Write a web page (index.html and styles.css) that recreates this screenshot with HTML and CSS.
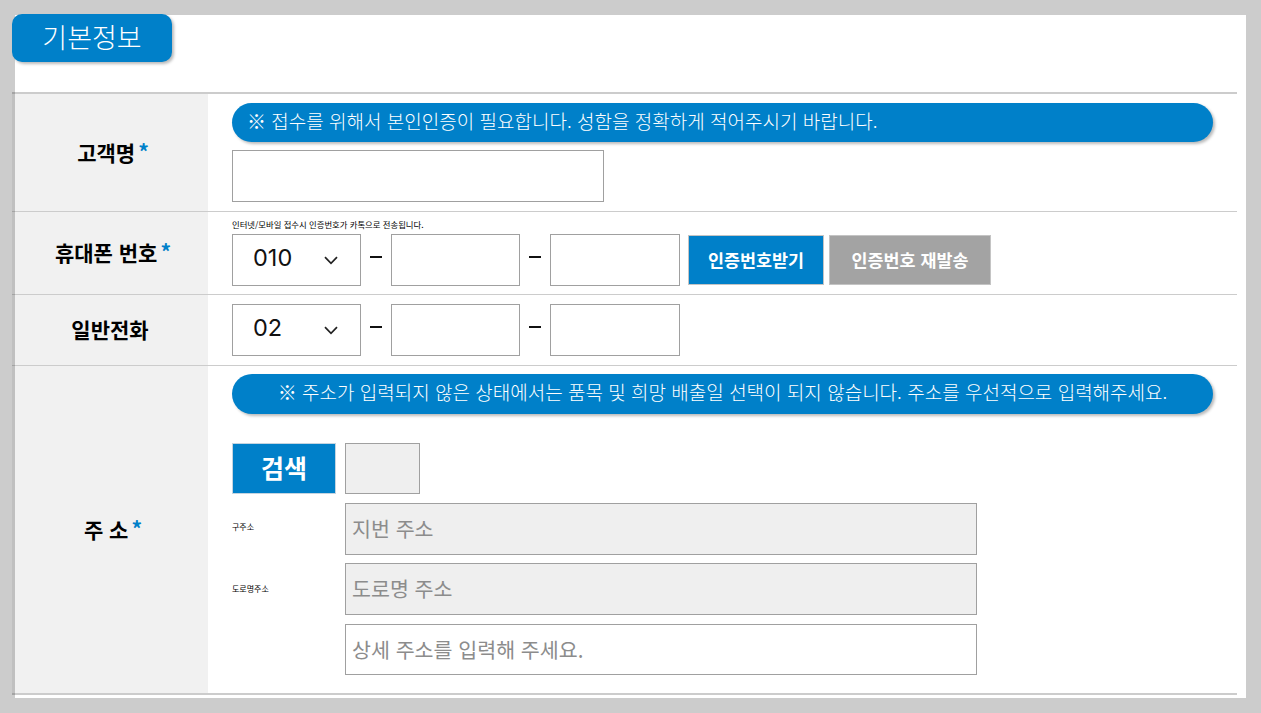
FILE: index.html
```html
<!DOCTYPE html>
<html lang="ko">
<head>
<meta charset="utf-8">
<title>기본정보</title>
<link rel="stylesheet" href="styles.css">
</head>
<body>
<main class="panel">
  <h2 class="title">기본정보</h2>
  <div class="form">
    <section class="row row-name">
      <div class="label">고객명<span class="req">*</span></div>
      <div class="body">
        <p class="notice">※ 접수를 위해서 본인인증이 필요합니다. 성함을 정확하게 적어주시기 바랍니다.</p>
        <input class="field name-field" type="text">
      </div>
    </section>
    <section class="row row-mobile">
      <div class="label">휴대폰 번호<span class="req">*</span></div>
      <div class="body">
        <p class="tiny">인터넷/모바일 접수시 인증번호가 카톡으로 전송됩니다.</p>
        <div class="phone">
          <div class="select">010<svg class="chev" viewBox="0 0 14 9" width="14" height="9"><path d="M1 1.2 7 7.4 13 1.2" fill="none" stroke="#222" stroke-width="1.7"/></svg></div>
          <span class="dash"></span>
          <input class="field part" type="text">
          <span class="dash"></span>
          <input class="field part last" type="text">
          <button class="btn blue" type="button">인증번호받기</button>
          <button class="btn gray" type="button">인증번호 재발송</button>
        </div>
      </div>
    </section>
    <section class="row row-phone">
      <div class="label">일반전화</div>
      <div class="body">
        <div class="phone">
          <div class="select">02<svg class="chev" viewBox="0 0 14 9" width="14" height="9"><path d="M1 1.2 7 7.4 13 1.2" fill="none" stroke="#222" stroke-width="1.7"/></svg></div>
          <span class="dash"></span>
          <input class="field part" type="text">
          <span class="dash"></span>
          <input class="field part last" type="text">
        </div>
      </div>
    </section>
    <section class="row row-addr">
      <div class="label">주 소<span class="req">*</span></div>
      <div class="body">
        <p class="notice center">※ 주소가 입력되지 않은 상태에서는 품목 및 희망 배출일 선택이 되지 않습니다. 주소를 우선적으로 입력해주세요.</p>
        <div class="addr">
          <button class="search" type="button">검색</button>
          <input class="field zip" type="text">
          <span class="tiny side old">구주소</span>
          <input class="field wide grayed" type="text" placeholder="지번 주소">
          <span class="tiny side road">도로명주소</span>
          <input class="field wide grayed" type="text" placeholder="도로명 주소">
          <span></span>
          <input class="field wide detail" type="text" placeholder="상세 주소를 입력해 주세요.">
        </div>
      </div>
    </section>
  </div>
</main>
</body>
</html>
```
FILE: styles.css
```css
* { box-sizing: border-box; }
html, body { margin: 0; height: 100%; }
body {
  background: #cccccc;
  padding: 15px;
  font-family: "Noto Sans CJK KR", "Noto Sans", sans-serif;
  color: #000;
  overflow: hidden;
}
.panel { display: flow-root; background: #fff; width: 1231px; height: 683px; }
.title {
  margin: -1px 0 0 -3px;
  width: 160px;
  height: 48px;
  background: #0080c9;
  color: #fff;
  border-radius: 10px;
  box-shadow: 2px 2px 3px #bbb;
  font-size: 27px;
  font-weight: 300;
  line-height: 46px;
  text-align: center;
}
.form {
  margin: 30px 0 0 -3px;
  width: 1225px;
  border-top: 2px solid rgba(0, 0, 0, .2);
  border-bottom: 2px solid rgba(0, 0, 0, .2);
}
.row {
  display: grid;
  grid-template-columns: 196px 1fr;
  border-bottom: 1px solid rgba(0, 0, 0, .2);
}
.row:last-child { border-bottom: 0; }
.row-name { height: 118px; }
.row-mobile { height: 83px; }
.row-phone { height: 71px; }
.row-addr { height: 327px; }
.label {
  background: rgba(0, 0, 0, .055);
  display: flex;
  justify-content: center;
  align-items: center;
  font-size: 21px;
  font-weight: 700;
  padding-bottom: 1px;
}
.row-mobile .label, .row-phone .label { padding-bottom: 3px; }
.req { color: #0080c9; margin: 0 -6px 2px 3px; }
.body { padding: 9px 24px 0; }
.row-addr .body { padding-top: 8px; }
.notice {
  margin: 0;
  width: 981px;
  height: 39px;
  background: #0080c9;
  color: #fff;
  border-radius: 20px;
  box-shadow: 2px 2px 3px #bbb;
  font-size: 19px;
  font-weight: 300;
  line-height: 35px;
  padding-left: 15px;
  white-space: nowrap;
}
.notice.center { height: 40px; padding: 0; text-align: center; }
.field {
  display: block;
  height: 52px;
  border: 1px solid #a0a0a0;
  background: #fff;
  padding: 0 6px 2px;
  margin: 0;
  font: 400 20.6px "Noto Sans CJK KR", sans-serif;
  border-radius: 0;
  outline: 0;
}
.field::placeholder { color: #8c8c8c; opacity: 1; }
.name-field { width: 372px; margin-top: 8px; }
.tiny { margin: 0; font-size: 8.35px; line-height: 13px; white-space: nowrap; color: #000; }
.row-mobile .body { padding-top: 6px; }
.row-mobile .phone { margin-top: 3px; }
.phone { display: flex; align-items: flex-start; }
.select {
  position: relative;
  width: 129px;
  height: 52px;
  border: 1px solid #a0a0a0;
  font: 400 23.5px/46px "Inter", "Noto Sans", sans-serif;
  padding-left: 20px;
  color: #111;
}
.chev { position: absolute; left: 91px; top: 21px; }
.dash { position: relative; width: 30px; height: 52px; }
.dash::before {
  content: "";
  position: absolute;
  left: 9px;
  top: 22px;
  width: 12px;
  height: 2px;
  background: #111;
}
.part { width: 129px; }
.part.last { width: 130px; }
.btn {
  height: 50px;
  margin-top: 1px;
  border: 1px solid #c4c4c4;
  color: #fff;
  font: 700 17.4px "Noto Sans CJK KR", sans-serif;
  padding: 0 0 2px;
}
.btn.blue { width: 136px; margin-left: 8px; background: #0080c9; }
.btn.gray { width: 162px; margin-left: 5px; background: #a3a3a3; }
.addr {
  display: grid;
  grid-template-columns: 113px 632px;
  grid-auto-rows: min-content;
  align-items: center;
  margin-top: 29px;
  row-gap: 8px;
}
.search {
  width: 104px;
  height: 51px;
  margin-bottom: 1px;
  background: #0080c9;
  border: 1px solid #c4d4e0;
  color: #fff;
  font: 700 25px "Noto Sans CJK KR", sans-serif;
  padding: 0 0 4px;
}
.zip { width: 75px; height: 51px; margin-bottom: 1px; background: #efefef; }
.wide { width: 632px; }
.detail { height: 51px; margin-top: 1px; }
.grayed { background: #efefef; }
.side { align-self: center; font-size: 8px; }
.side.old { padding-bottom: 6px; }
.side.road { padding-bottom: 2px; }
```
